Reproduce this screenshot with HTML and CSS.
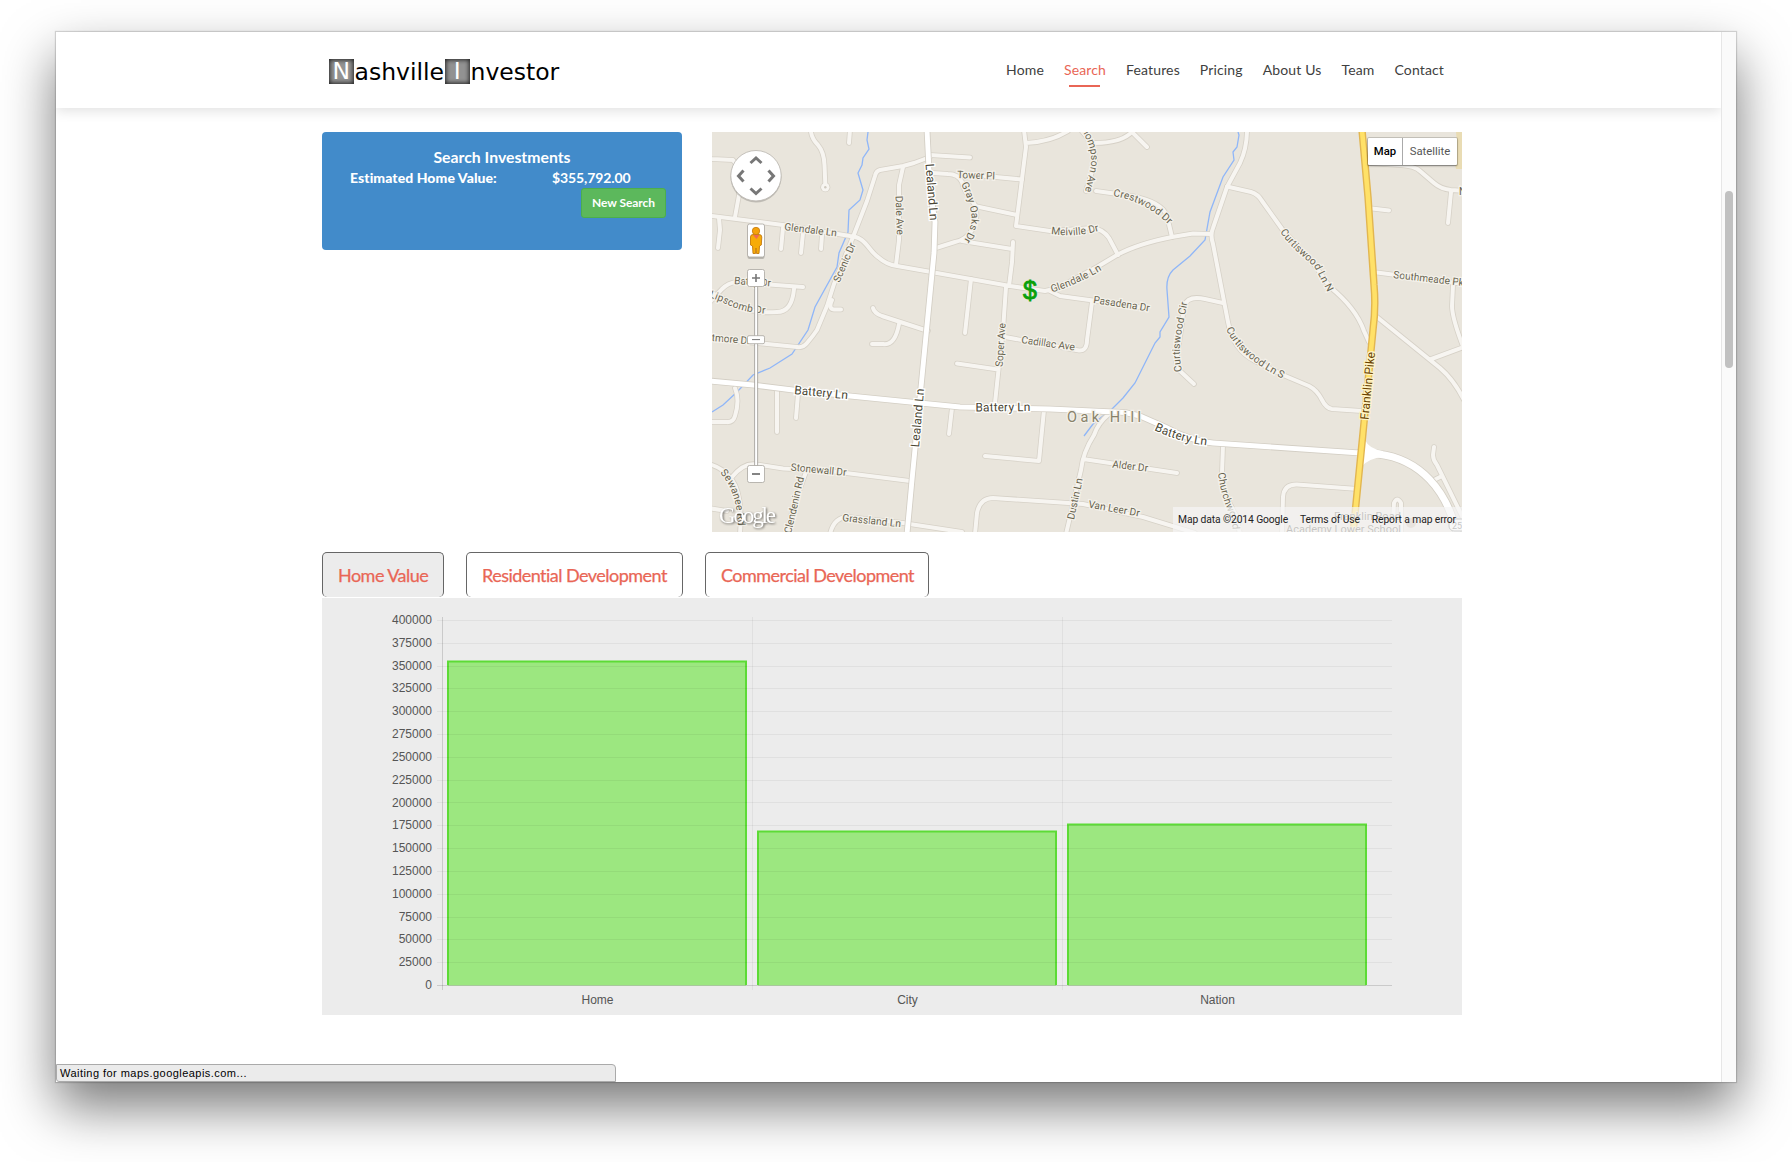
FILE: index.html
```html
<!DOCTYPE html>
<html lang="en">
<head>
<meta charset="utf-8">
<title>Nashville Investor</title>
<link rel="stylesheet" href="styles.css">
</head>
<body>
<div class="window">
  <div class="page">
    <header class="header">
      <div class="header-inner">
        <a class="logo"><span class="logo-box">N</span><span class="logo-text">ashville</span><span class="logo-box">I</span><span class="logo-text">nvestor</span></a>
        <nav class="nav">
          <a>Home</a><a class="active">Search</a><a>Features</a><a>Pricing</a><a>About Us</a><a>Team</a><a>Contact</a>
        </nav>
      </div>
    </header>
    <main class="container">
      <div class="top-row">
        <section class="panel">
          <h2>Search Investments</h2>
          <div class="value-row"><span class="value-label">Estimated Home Value:</span><span class="value">$355,792.00</span></div>
          <button class="btn">New Search</button>
        </section>
        <section class="map">
          <svg class="map-svg" width="750" height="400" viewBox="712 132 750 400">
            <defs>
              <g id="minor">
                <path d="M700,158 L712,159 L733,160 L741,172 L739,195 L735,217"/>
                <path d="M705,215 L712,216 L783,225 L850,236 C866,237 868,250 878,257 Q887,265 897,266 L934,272.500 L1010,286 L1045,291 L1058,288 L1097,267 L1117,255 Q1137,244 1172,237 L1193,233.500 L1211,234"/>
                <path d="M719,218 L720,230 L718,248 M783,228 L781,249 M803,233 L801,253 M822,235 L821,249"/>
                <path d="M811,132 Q812,139 818,145 Q824,152 824.500,165 L825.300,184 M850,130 L849,143"/>
                <path d="M930,157 L914,163 L903,166 L880,170 Q876,171 875,176 L867,201 L853,237 L834,284 L827,306 L817,330 Q813,336 807,343 Q803,348 797,347 L767,344 L712,339"/>
                <path d="M832,300 Q828,309 834,309.500 L841,309.500 M930,155 L970,157.500"/>
                <path d="M903,167 L899,185 L899,240 L896,265"/>
                <path d="M936,248 L955,242 Q966,240 972,230 Q979,218 975,205 Q963,190 962,182 Q958,174 948,174 L933,173 M985,176 L1022,179.500"/>
                <path d="M1024,130 L1026,147 L1016,226 L1050,231 L1092,228 Q1103,229 1109,238 L1118,255 M1026,143 Q1050,142 1068,131"/>
                <path d="M977,206.500 L1017,215 M962,241 L1012,249 M1013,242 L1012,262 L1009,286"/>
                <path d="M1081,130 Q1096,146 1095,162 L1086,191 M1095,143 Q1122,143 1133,131 M1131,131 L1147,147"/>
                <path d="M1096,191 L1132,196 Q1162,202 1167,216 L1172,237"/>
                <path d="M1006,287 L1003,330 L999,365 L995,403 M971,279 L965,333 M957,363.500 L998,369.500"/>
                <path d="M1050,291 L1060,296 L1093,300.500 L1145,308 M1092,302 L1087,340 Q1087,351 1079,350.500 L1005,337"/>
                <path d="M1223,303 L1205,299 Q1188,295 1184,306 L1181,330 L1176,362 L1180,371 L1194,384"/>
                <path d="M1247,130 Q1247,148 1240,163 L1227,187 L1213,228 Q1210,235 1213,244 L1228,322 Q1233,350 1255,361 L1283,375 L1309,386 Q1317,390 1322,400 Q1326,408 1332,409 L1362,411"/>
                <path d="M1227,186.500 L1251,192 Q1258,194 1262,201 L1282,229 L1313,263 L1330,287 Q1356,308 1364,331 L1369,342"/>
                <path d="M1367,163 L1400,165 Q1415,166 1420,171 L1434,183 Q1441,189 1451,190 L1464,191 M1451,192 L1448,223 M1372,208.500 L1389,210.500"/>
                <path d="M1377,272.500 L1464,284 M1453,285 L1452,306 Q1452,318 1464,349 M1430,359.500 L1464,347 M1377,317 L1440,368 Q1454,380 1464,400"/>
                <path d="M777,391 L777,432 M798,394 L796,418 M735,388 Q740,400 735,416 Q733,423 726,422 L712,422 M952,408 L949,434"/>
                <path d="M873,308 Q874,313 882,316 L928,331 M899,324 Q895,346 883,344 L872,344"/>
                <path d="M1044,410 L1039,461 L985,456"/>
                <path d="M1109,414 Q1098,423 1094,435 Q1083,452 1081,470 L1066,534 M1083,459 L1177,473"/>
                <path d="M975,534 L977,513 Q980,498 993,498 L1083,504 L1143,517 L1195,533"/>
                <path d="M708,464 Q723,467 732,480 Q743,495 740,534 M732,477 Q744,462 757,464.500 L783,468.500 L830,471 L910,481"/>
                <path d="M806,472 L803,480 L793,508 L787,534 M830,534 Q834,517 848,517 L903,523 L962,532 M708,508 L727,511"/>
                <path d="M708,304 L722,289 Q728,283 736,282 L803,287 M794,289 Q792,312 777,312 Q755,314 735,305 L708,291"/>
                <path d="M1223,445 L1222,473 Q1223,495 1236,515 L1240,534 M1282,534 L1283,497 Q1284,484 1297,484.500 L1358,489"/>
                <path d="M1393,522 L1394,503 Q1397,496 1401,503 L1401,534 M1434,447 L1433,455 Q1433,460 1437,465 L1464,520 M1432,481 L1442,476"/>
              </g>
              <g id="major">
                <path d="M927,130 L930,190 L935,222 L934,253 L912,480 L907,534"/>
                <path d="M710,381 L753,385 L793,390 L850,396 L960,407 L1050,409 L1125,412.500 L1140,416 L1165,427 Q1190,441 1213,443 L1360,453"/>
              </g>
              <path id="se" d="M1360,453 L1378,454 C1420,459 1447,490 1457,534"/>
              <path id="pike" d="M1362,130 L1368,197 L1374,285 Q1376,307 1373,330 L1363,433 L1353,534"/>
              <path id="p-lips" d="M709,297 L722,302 Q742,313 768,314"/>
              <path id="p-sew" d="M720,473 Q737,490 738,528"/>
              <path id="p-gray" d="M961,184 Q969,199 971,213 Q974,226 961,245"/>
              <path id="p-mel" d="M1051,234 Q1075,238 1102,230"/>
              <path id="p-glen" d="M1052,292.500 Q1076,285 1102,270"/>
              <path id="p-thom" d="M1078,125 Q1093,145 1091,165 L1084,196"/>
              <path id="p-crest" d="M1113,196 Q1145,201 1168,224"/>
              <path id="p-cir" d="M1182,371 Q1178,355 1181,335 L1188,300"/>
              <path id="p-cn" d="M1280,232 Q1292,249 1314,266 L1330,297"/>
              <path id="p-cs" d="M1226,329 Q1238,357 1285,380"/>
              <path id="p-bat" d="M1154,430 Q1183,444 1213,446"/>
              <path id="p-church" d="M1218,473 Q1221,498 1232,520 L1234,550"/>
            </defs>
            <rect x="712" y="132" width="750" height="400" fill="#e9e5dc"/>
            <path d="M1456,132 h6 v37 h-6 q-4,-18 1,-27z" fill="#e9dcb4"/>
            <g class="river">
              <path d="M868,132 L867,140 L869,149 L863,158 L862,165 L858,173 L863,190 L860,200 L849,210 L848,232 L839,253 L837,267 L815,307 L808,330 L792,354 L770,368 L753,375 L737,392 L723,405 L712,412"/>
              <path d="M1238,132 L1239,135 L1237,147 L1233,152 L1234,160 L1223,177 L1210,212 L1205,240 L1190,256 L1173,270 Q1166,277 1167,290 L1169,317 L1160,332 L1160,337 L1155,343 L1135,383 L1123,398 L1112,409 L1093,424 L1084,436"/>
            </g>
            <use href="#minor" class="road" stroke="#d6d1c7" stroke-width="5.600"/>
            <circle cx="825.300" cy="187.300" r="5" fill="#d6d1c7"/>
            <use href="#minor" class="road" stroke="#f7f5f1" stroke-width="4"/>
            <circle cx="825.300" cy="187.300" r="4.200" fill="#f7f5f1"/><circle cx="825.300" cy="187.300" r="1.200" fill="#cfcac0"/>
            <use href="#major" class="road" stroke="#d3cec4" stroke-width="6.600"/>
            <use href="#se" class="road" stroke="#d3cec4" stroke-width="8.600"/>
            <use href="#major" class="road" stroke="#fff" stroke-width="4.900"/>
            <use href="#se" class="road" stroke="#fff" stroke-width="6.900"/>
            <path d="M1365,440 Q1369,449 1383,451 L1383,457 Q1369,458 1361,467 L1357,462 L1360,441z" fill="#fff"/>
            <use href="#pike" class="road" stroke="#e2b650" stroke-width="7.400"/>
            <use href="#pike" class="road" stroke="#ffe168" stroke-width="4.600"/>
            <g class="label">
              <text transform="translate(784,230) rotate(7)" textLength="53">Glendale Ln</text>
              <text transform="translate(839.500,283) rotate(-67)" textLength="42">Scenic Dr</text>
              <text transform="translate(895.500,196) rotate(88)" textLength="39">Dale Ave</text>
              <text transform="translate(734,284) rotate(4)" textLength="37">Batey Dr</text>
              <text><textPath href="#p-lips">Lipscomb Dr</textPath></text>
              <text transform="translate(711.500,341) rotate(5)" textLength="39">tmore Dr</text>
              <text transform="translate(790.500,470.500) rotate(5.500)" textLength="56">Stonewall Dr</text>
              <text><textPath href="#p-sew">Sewanee Rd</textPath></text>
              <text transform="translate(791,534) rotate(-77)" textLength="58">Clendenin Rd</text>
              <text transform="translate(842,521) rotate(6)" textLength="59">Grassland Ln</text>
              <text transform="translate(957,178) rotate(2.500)" textLength="38">Tower Pl</text>
              <text><textPath href="#p-gray">Gray Oaks Dr</textPath></text>
              <text><textPath href="#p-mel">Melville Dr</textPath></text>
              <text><textPath href="#p-glen">Glendale Ln</textPath></text>
              <text><textPath href="#p-thom">Thompson Ave</textPath></text>
              <text><textPath href="#p-crest">Crestwood Dr</textPath></text>
              <text transform="translate(1093,303) rotate(8.500)" textLength="57">Pasadena Dr</text>
              <text transform="translate(1021,343) rotate(8)" textLength="54">Cadillac Ave</text>
              <text transform="translate(1002.500,367) rotate(-86)" textLength="44">Soper Ave</text>
              <text transform="translate(1112,467.500) rotate(6.500)" textLength="36">Alder Dr</text>
              <text transform="translate(1074,520) rotate(-78)" textLength="42">Dustin Ln</text>
              <text transform="translate(1088,507.500) rotate(10)" textLength="52">Van Leer Dr</text>
              <text><textPath href="#p-cir">Curtiswood Cir</textPath></text>
              <text><textPath href="#p-cn">Curtiswood Ln N</textPath></text>
              <text><textPath href="#p-cs">Curtiswood Ln S</textPath></text>
              <text transform="translate(1393,278) rotate(6.500)" textLength="71">Southmeade Pk</text>
              <text x="1459" y="195">N</text>
              <text><textPath href="#p-church">Churchwood</textPath></text>
              <text class="poi" x="1334" y="520" textLength="67">Franklin Road</text>
              <text class="poi" x="1286" y="533" textLength="115">Academy Lower School</text>
            </g>
            <g class="label label-major">
              <text transform="translate(925.500,164) rotate(85.500)" textLength="57">Lealand Ln</text>
              <text transform="translate(919,447.500) rotate(-85)" textLength="59">Lealand Ln</text>
              <text transform="translate(794,394) rotate(5.500)" textLength="54">Battery Ln</text>
              <text transform="translate(975.500,411.500) rotate(-.5)" textLength="55">Battery Ln</text>
              <text><textPath href="#p-bat">Battery Ln</textPath></text>
            </g>
            <text class="pike-label" transform="translate(1368.500,420) rotate(-84.500)" textLength="68">Franklin Pike</text>
            <text class="town" x="1067" y="422" textLength="74">Oak Hill</text>
            <rect x="1449" y="519" width="18" height="12" rx="5" fill="#fff" stroke="#777"/><text x="1452" y="529" font-size="9" font-family="Roboto" fill="#555">25</text>
            <circle cx="1411" cy="523" r="5" fill="#c9b9a8"/>
            <text class="glogo glogo-shadow" x="720" y="523.500" textLength="57" aria-hidden="true">Google</text>
            <text class="marker" x="1023" y="299">$</text>
            <g class="controls">
              <circle cx="756" cy="177" r="25.500" fill="#000" opacity=".18"/>
              <circle cx="756" cy="175.700" r="25.200" fill="#fff" stroke="#b9b5ae" stroke-width=".8"/>
              <path d="M750.500,163 L756,158 L761.500,163 M750.500,188.500 L756,193.500 L761.500,188.500 M743.500,170.500 L738.500,176 L743.500,181.500 M768.500,170.500 L773.500,176 L768.500,181.500" fill="none" stroke="#777" stroke-width="3"/>
              <rect x="747.500" y="225" width="17" height="34" rx="2" fill="#000" opacity=".2"/>
              <rect class="ctl" x="747.500" y="224" width="17" height="33" rx="2"/>
              <path d="M750.500,237 Q750.500,234.500 753,234.500 L759,234.500 Q761.800,234.500 761.800,237 L761.300,245 L759.500,246 L759,253.500 L756.500,253.500 L756,248 L755.500,253.500 L753,253.500 L752.500,246 L750.500,245z" fill="#f7ab08" stroke="#c4790c" stroke-width=".9"/>
              <circle cx="756" cy="231" r="3.700" fill="#f5a20a" stroke="#c4790c" stroke-width=".8"/>
              <path d="M753,235 L759.500,235 L756.500,239z" fill="#ee6a55"/>
              <rect x="754.700" y="286" width="3" height="180" fill="#fff" stroke="#9d9a95" stroke-width=".8"/>
              <rect class="ctl" x="747.500" y="269.500" width="17" height="17" rx="2"/>
              <path d="M752,278 h8 M756,274 v8" stroke="#777" stroke-width="1.600"/>
              <rect class="ctl" x="747.500" y="335.700" width="17" height="8" rx="1.500"/>
              <path d="M752,339.600 h8" stroke="#777" stroke-width="1"/>
              <rect class="ctl" x="747.500" y="465.500" width="17" height="17" rx="2"/>
              <path d="M752,474 h8" stroke="#777" stroke-width="1.800"/>
            </g>
          </svg>
          <div class="map-type"><span class="on">Map</span><span>Satellite</span></div>
          <div class="map-footer"><span>Map data ©2014 Google</span><span>Terms of Use</span><span>Report a map error</span></div>
        </section>
      </div>
      <div class="tabs"><a class="tab current">Home Value</a><a class="tab">Residential Development</a><a class="tab">Commercial Development</a></div>
      <section class="chart">
        <svg class="chart-svg" width="1140" height="417" viewBox="322 598 1140 417">
          <rect class="bar" x="448" y="661.500" width="298" height="324"/>
          <rect class="bar" x="758" y="831.500" width="298" height="154"/>
          <rect class="bar" x="1068" y="824.500" width="298" height="161"/>
          <path class="edge" d="M448,985 V661.500 H746 V985 M758,985 V831.500 H1056 V985 M1068,985 V824.500 H1366 V985"/>
          <path class="grid" d="M437,620.500 H1392 M437,643.500 H1392 M437,666.500 H1392 M437,688.500 H1392 M437,711.500 H1392 M437,734.500 H1392 M437,757.500 H1392 M437,780.500 H1392 M437,802.500 H1392 M437,825.500 H1392 M437,848.500 H1392 M437,871.500 H1392 M437,894.500 H1392 M437,917.500 H1392 M437,939.500 H1392 M437,962.500 H1392 M752.500,617 V990 M1062.500,617 V990"/>
          <path class="axis" d="M437,985.500 H1392 M442.500,617 V990"/>
          <g class="ticks" text-anchor="end">
            <text x="432" y="624">400000</text><text x="432" y="647">375000</text><text x="432" y="670">350000</text><text x="432" y="692">325000</text><text x="432" y="715">300000</text><text x="432" y="738">275000</text><text x="432" y="761">250000</text><text x="432" y="784">225000</text><text x="432" y="807">200000</text><text x="432" y="829">175000</text><text x="432" y="852">150000</text><text x="432" y="875">125000</text><text x="432" y="898">100000</text><text x="432" y="921">75000</text><text x="432" y="943">50000</text><text x="432" y="966">25000</text><text x="432" y="989">0</text>
          </g>
          <g class="ticks" text-anchor="middle"><text x="597.500" y="1004">Home</text><text x="907.500" y="1004">City</text><text x="1217.500" y="1004">Nation</text></g>
        </svg>
      </section>
    </main>
    <div class="status">Waiting for maps.googleapis.com...</div>
  </div>
  <div class="scrollbar"><div class="thumb"></div></div>
</div>
</body>
</html>
```
FILE: styles.css
```css
* { box-sizing: border-box; }
body { margin: 0; height: 1162px; padding: 32px 56px 80px; background: #fff; font-family: Lato, sans-serif; overflow: hidden; }
.window { display: flex; width: 1680px; height: 1050px; background: #fff; box-shadow: 0 0 1px 1px rgba(0,0,0,.15), 0 25px 50px rgba(0,0,0,.53); }
.page { position: relative; width: 1665px; overflow: hidden; }
.header { height: 76px; box-shadow: 0 3px 12px rgba(0,0,0,.12); }
.header-inner { width: 1140px; margin-left: 266px; display: flex; justify-content: space-between; padding: 26px 18px 0 7px; }
.logo { display: flex; align-items: center; height: 27px; font: 23.500px/27px "DejaVu Sans", sans-serif; color: #000; }
.logo-box { width: 24.500px; height: 25px; text-align: center; line-height: 25px; background: #929292; color: #fff; box-shadow: inset 0 0 4px 1px #222; }
.logo-text { margin: 2px 1px 0; }
.nav { display: flex; gap: 20px; font-size: 14px; line-height: 20px; letter-spacing: .14px; color: #404040; padding-top: 2px; }
.nav a { height: 27px; }
.nav .active { color: #e96656; position: relative; }
.nav .active::after { content: ""; position: absolute; left: 5px; right: 6px; bottom: 0; height: 2px; background: #e96656; }
.container { width: 1140px; margin-left: 266px; padding-top: 24px; }
.top-row { display: flex; justify-content: space-between; align-items: flex-start; }
.panel { width: 360px; height: 118px; border-radius: 4px; background: #428bca; color: #fff; padding: 14px 16px 0 28px; display: flex; flex-direction: column; }
.panel h2 { margin: 0 0 0 -12px; text-align: center; font-size: 15.800px; line-height: 21px; font-weight: 700; }
.value-row { display: flex; gap: 54px; font-size: 14px; line-height: 21px; font-weight: 700; }
.value-label { width: 148px; white-space: nowrap; font-weight: 900; letter-spacing: .07px; }
.value { letter-spacing: -.1px; }
.btn { align-self: flex-end; width: 85px; height: 30px; padding: 0; border: 1px solid #4cae4c; border-radius: 3px; background: #5cb85c; color: #fff; font: 700 12px/18px Lato, sans-serif; letter-spacing: -.05px; }
.map { position: relative; width: 750px; height: 400px; overflow: hidden; }
.map-svg, .chart-svg { display: block; }
.road { fill: none; stroke-linejoin: round; stroke-linecap: round; }
.river path { fill: none; stroke: #8fb6f8; stroke-width: 1.300; }
.label text { font: 10.300px Roboto, sans-serif; fill: #67634f; stroke: #f4f1ea; stroke-width: 2.500px; paint-order: stroke; letter-spacing: .1px; }
.label-major text { font-size: 12px; fill: #4b4735; stroke: #fff; }
.label .poi { fill: #59544b; stroke-width: 1px; font-size: 11px; }
.pike-label { font: 12px Roboto, sans-serif; fill: #6a4300; stroke: #fff3c4; stroke-width: 2.500px; paint-order: stroke; }
.town { font: 14.500px Roboto, sans-serif; fill: #88826a; stroke: #f4f1ea; stroke-width: 2.500px; paint-order: stroke; }
.glogo { font: 23px "Liberation Serif", serif; fill: #fff; filter: drop-shadow(1px 1px 1px rgba(0,0,0,.55)); transform: translate(-1px,-1px); }
.marker { font: 25px "Liberation Sans", sans-serif; fill: #0aa00a; stroke: #0aa00a; stroke-width: .8px; }
.ctl { fill: #fff; stroke: #aaa69f; stroke-width: .8; }
.map-type { position: absolute; top: 6px; right: 5px; display: flex; height: 27px; background: #fff; border-radius: 1px; box-shadow: 0 1px 2px rgba(0,0,0,.4), 0 0 0 1px rgba(0,0,0,.15); font: 11.300px/28px Roboto, sans-serif; color: #565656; }
.map-type span { width: 54px; text-align: center; }
.map-type .on { width: 35px; color: #000; font-weight: 500; border-right: 1px solid #aaa; }
.map-footer { position: absolute; right: 0; bottom: 0; width: 289px; height: 25px; padding: 0 6px 0 5px; display: flex; justify-content: space-between; background: rgba(245,245,245,.7); font: 10.300px/25px Roboto, sans-serif; letter-spacing: -.1px; color: #222; white-space: nowrap; }
.tabs { display: flex; gap: 22px; margin-top: 20px; height: 46px; }
.tab { width: 122px; height: 45px; padding-left: 15px; border: 1px solid #666; border-bottom: 0; border-radius: 5px; color: #e96656; font-size: 18px; line-height: 45px; letter-spacing: -.53px; -webkit-text-stroke: .25px #e96656; white-space: nowrap; }
.tab:nth-child(2) { width: 217px; }
.tab:nth-child(3) { width: 224px; }
.current { background: #ececec; }
.chart { height: 417px; background: #ececec; }
.bar { fill: rgba(75,225,20,.5); }
.edge { fill: none; stroke: #5ddb36; stroke-width: 2; }
.grid { stroke: rgba(0,0,0,.05); }
.axis { stroke: rgba(0,0,0,.14); }
.ticks { font: 12px "Liberation Sans", sans-serif; fill: #555; }
.status { position: absolute; left: 0; bottom: 0; width: 560px; height: 18px; padding-left: 3px; background: #ebebeb; border: 1px solid #aaa; border-radius: 0 4px 0 3px; font: 11px/16px "Liberation Sans", sans-serif; color: #000; letter-spacing: .46px; }
.scrollbar { width: 15px; background: #fafafa; border-left: 1px solid #e6e6e6; padding: 159px 3px 0; }
.thumb { width: 8px; height: 177px; border-radius: 4px; background: #c1c1c1; }
```
